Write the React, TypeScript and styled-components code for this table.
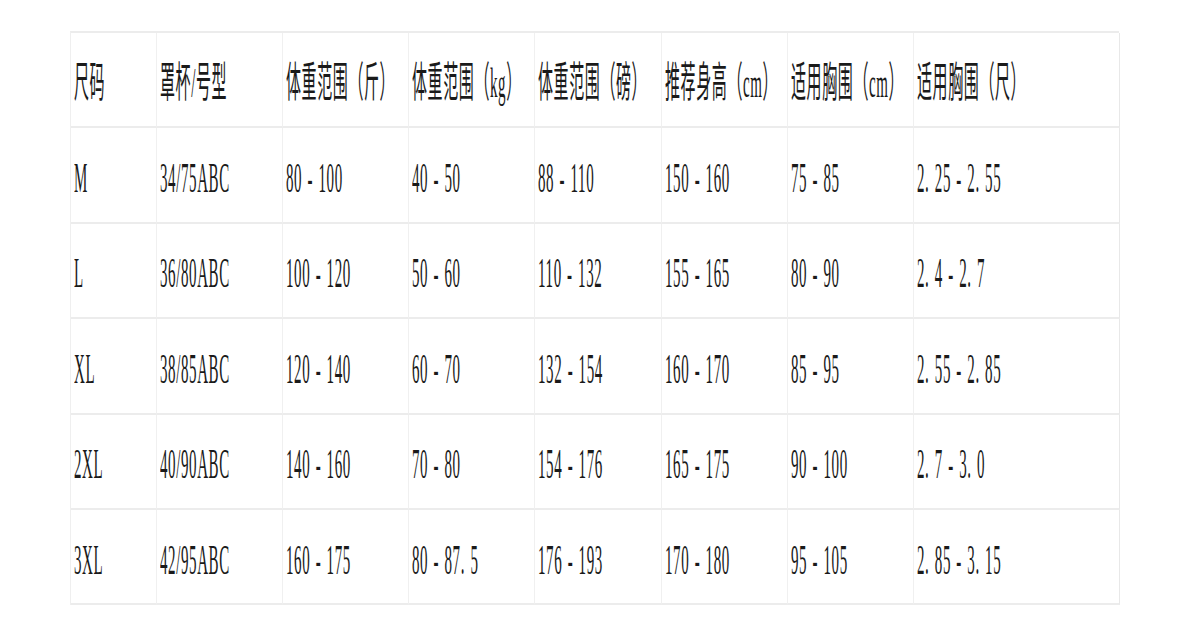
import React from "react"
import styled, { createGlobalStyle } from "styled-components"

const GlobalStyle = createGlobalStyle`
  html, body {
    margin: 0;
    padding: 0;
    background: #ffffff;
  }
`

const Page = styled.div`
  padding: 31px 0 0 70px;
`

const Table = styled.div`
  display: grid;
  grid-template-columns: 86px 126px 126px 126px 127px 126px 126px 206px;
  grid-auto-rows: 95.4px;
  width: 1049px;
  border-top: 2px solid #ececec;
  border-left: 1px solid #efefef;
  box-sizing: border-box;
`

const Cell = styled.div<{ $last?: boolean }>`
  display: flex;
  align-items: center;
  padding: 9px 0 0 3px;
  box-sizing: border-box;
  border-bottom: 2px solid #ececec;
  border-right: 1px solid ${p => (p.$last ? "#e8e8e8" : "#f0f0f0")};
  min-width: 0;
  overflow: visible;
`

const Text = styled.span`
  display: inline-block;
  font-family: "Liberation Serif", "Noto Sans CJK SC", serif;
  font-size: 15px;
  line-height: 15px;
  letter-spacing: 0.6px;
  word-spacing: 1px;
  white-space: nowrap;
  color: #1a1a1a;
  transform: scaleY(2.8);
  transform-origin: left center;
`

const header = [
  "尺码",
  "罩杯/号型",
  "体重范围（斤）",
  "体重范围（kg）",
  "体重范围（磅）",
  "推荐身高（cm）",
  "适用胸围（cm）",
  "适用胸围（尺）",
]

const rows = [
  ["M", "34/75ABC", "80 - 100", "40 - 50", "88 - 110", "150 - 160", "75 - 85", "2.25 - 2.55"],
  ["L", "36/80ABC", "100 - 120", "50 - 60", "110 - 132", "155 - 165", "80 - 90", "2.4 - 2.7"],
  ["XL", "38/85ABC", "120 - 140", "60 - 70", "132 - 154", "160 - 170", "85 - 95", "2.55 - 2.85"],
  ["2XL", "40/90ABC", "140 - 160", "70 - 80", "154 - 176", "165 - 175", "90 - 100", "2.7 - 3.0"],
  ["3XL", "42/95ABC", "160 - 175", "80 - 87.5", "176 - 193", "170 - 180", "95 - 105", "2.85 - 3.15"],
]

// SimSun-like wide dot: "2.25" is drawn as "2. 25"
const spaced = (s: string) => s.replace(/\.(\d)/g, ". $1")

export default function App() {
  return (
    <Page>
      <GlobalStyle />
      <Table>
        {[header, ...rows].map((row, r) =>
          row.map((v, c) => (
            <Cell key={`${r}-${c}`} $last={c === row.length - 1}>
              <Text>{r === 0 ? v : spaced(v)}</Text>
            </Cell>
          ))
        )}
      </Table>
    </Page>
  )
}
